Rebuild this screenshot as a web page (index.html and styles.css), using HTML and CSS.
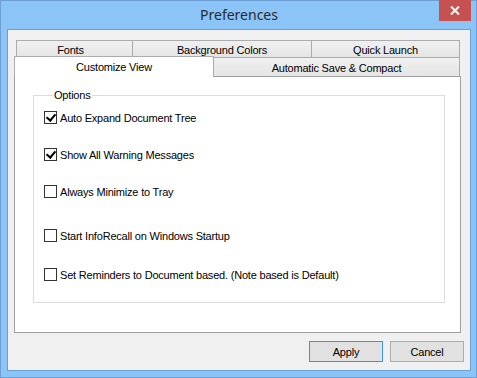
FILE: index.html
```html
<!DOCTYPE html>
<html lang="en">
<head>
    <meta charset="UTF-8">
    <title>Preferences</title>
    <link rel="stylesheet" href="styles.css">
</head>
<body>

<div class="window">
    <!-- Title bar -->
    <div class="titlebar">
        <span class="title">Preferences</span>
        <button class="close" type="button" aria-label="Close">
            <svg width="10" height="9" viewBox="0 0 10 9">
                <path d="M1 0.5 L9 8.5 M9 0.5 L1 8.5" stroke="#fff" stroke-width="2"/>
            </svg>
        </button>
    </div>

    <div class="client">
        <!-- Tab control -->
        <div class="tabs">
            <div class="tab-row back">
                <div class="tab t-fonts">Fonts</div>
                <div class="tab t-colors">Background Colors</div>
                <div class="tab t-launch">Quick Launch</div>
            </div>
            <div class="tab-row front">
                <div class="tab selected">Customize View</div>
                <div class="tab t-save">Automatic Save &amp; Compact</div>
            </div>
            <div class="panel">
                <fieldset class="group">
                    <legend>Options</legend>
                    <label class="check row-1"><span class="box checked"></span>Auto Expand Document Tree</label>
                    <label class="check row-2"><span class="box checked"></span>Show All Warning Messages</label>
                    <label class="check row-3"><span class="box"></span>Always Minimize to Tray</label>
                    <label class="check row-4"><span class="box"></span>Start InfoRecall on Windows Startup</label>
                    <label class="check row-5"><span class="box"></span>Set Reminders to Document based. (Note based is Default)</label>
                </fieldset>
            </div>
        </div>

        <!-- Dialog buttons -->
        <div class="buttons">
            <button class="btn default" type="button">Apply</button>
            <button class="btn" type="button">Cancel</button>
        </div>
    </div>
</div>

</body>
</html>
```

FILE: styles.css
```css
* {
    box-sizing: border-box;
}
body {
    margin: 0;
    background-color: #fff;
    font-family: "Liberation Sans", Arial, sans-serif;
    font-size: 11px;
    letter-spacing: -0.2px;
    color: #000;
}
.window {
    width: 477px;
    height: 378px;
    background-color: #8bc4f7;
    border: 1px solid #6d9ed4;
    padding: 0 5px 6px 6px;
    display: flex;
    flex-direction: column;
}
.titlebar {
    height: 28px;
    display: flex;
    justify-content: center;
    align-items: center;
    position: relative;
}
.title {
    font-family: "Noto Sans", "Open Sans", sans-serif;
    font-size: 14px;
    letter-spacing: 0;
    color: #2b2b2b;
    margin-top: -2px;
}
.close {
    position: absolute;
    top: -1px;
    right: 0;
    width: 32px;
    height: 21px;
    border: none;
    padding: 0;
    background-color: #c75050;
    display: flex;
    justify-content: center;
    align-items: center;
}
.client {
    flex: 1;
    background-color: #f0f0f0;
    border: 1px solid #6d9ed4;
    padding: 10px 0 0 0;
}
.tabs {
    margin: 0 9px 0 6px;
}
.tab-row {
    display: flex;
}
.tab {
    display: flex;
    justify-content: center;
    align-items: center;
    border: 1px solid #acacac;
    background: linear-gradient(#f0f0f0, #e5e5e5);
    color: #000;
}
.back {
    margin: 0 1px 0 2px;
}
.back .tab {
    height: 18px;
    border-right: none;
    padding-top: 1px;
}
.back .t-fonts {
    width: 116px;
    padding-right: 8px;
}
.back .t-colors {
    width: 179px;
}
.back .t-launch {
    flex: 1;
    border-right: 1px solid #acacac;
}
.front {
    margin-top: -2px;
    align-items: flex-start;
}
.front .selected {
    width: 200px;
    height: 21px;
    margin-bottom: -1px;
    background: #fff;
    border-bottom: none;
    position: relative;
    z-index: 1;
    padding-bottom: 1px;
}
.front .t-save {
    flex: 1;
    margin: 2px 1px 0 0;
    height: 18px;
    border-top: none;
    border-bottom: none;
    border-left: none;
    padding-top: 1px;
}
.panel {
    height: 257px;
    background-color: #fff;
    border: 1px solid #a0a0a0;
    padding: 12px 15px 0 18px;
}
.group {
    margin: 0;
    height: 214px;
    border: 1px solid #dcdcdc;
    padding: 0 0 0 10px;
    min-width: 0;
}
legend {
    padding: 0 1px;
    margin-left: 9px;
    color: #000;
}
.check {
    display: flex;
    align-items: center;
    height: 13px;
    white-space: nowrap;
}
.row-1 { margin-top: 10px; }
.row-2 { margin-top: 24px; }
.row-3 { margin-top: 24px; }
.row-4 { margin-top: 31px; }
.row-5 { margin-top: 26px; }
.box {
    width: 13px;
    height: 13px;
    border: 1px solid #333;
    background-color: #fff;
    margin-right: 3px;
    flex-shrink: 0;
    position: relative;
}
.box.checked::after {
    content: "";
    position: absolute;
    left: 3px;
    top: 0px;
    width: 4px;
    height: 7px;
    border: solid #000;
    border-width: 0 2px 2px 0;
    transform: rotate(40deg);
}
.buttons {
    display: flex;
    justify-content: flex-end;
    gap: 7px;
    margin: 8px 6px 0 0;
}
.btn {
    width: 74px;
    height: 21px;
    border: 1px solid #acacac;
    background-color: #e1e1e1;
    font-family: "Liberation Sans", Arial, sans-serif;
    font-size: 11px;
    letter-spacing: -0.2px;
    color: #000;
    padding: 0;
}
.btn.default {
    border-color: #3c93e0;
}
```
